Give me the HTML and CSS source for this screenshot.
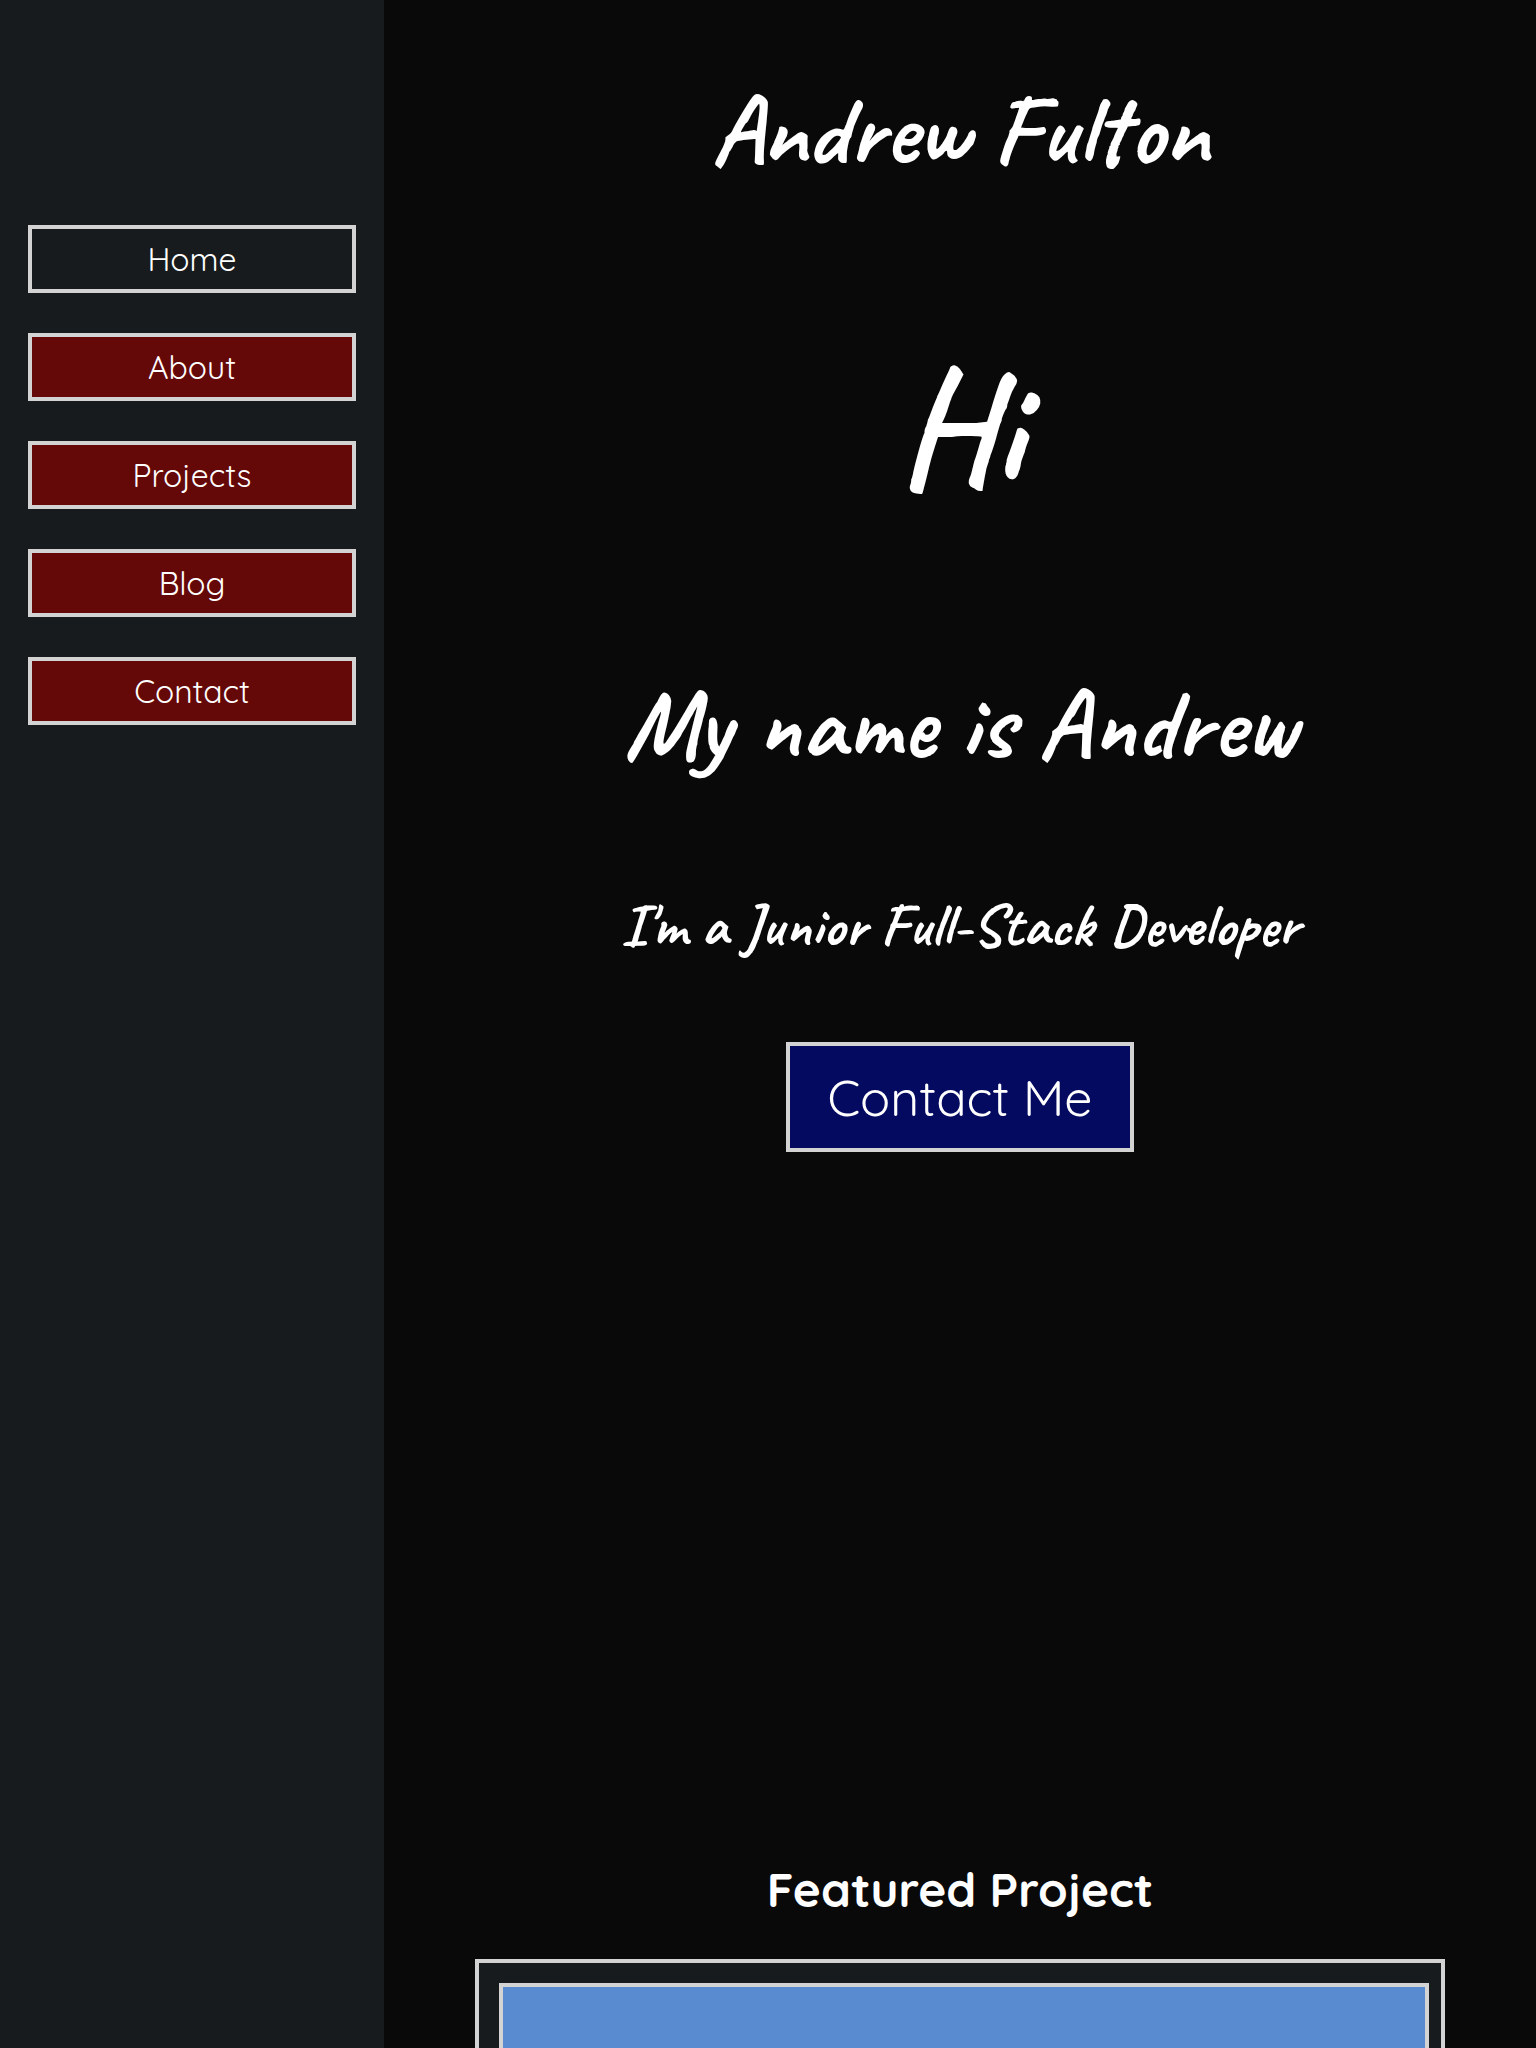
FILE: index.html
```html
<!DOCTYPE html>
<html lang="en">
<head>
<meta charset="utf-8">
<title>Andrew Fulton</title>
<link rel="stylesheet" href="styles.css">
</head>
<body>
<div class="page">
  <nav class="sidebar">
    <a class="nav-link active">Home</a>
    <a class="nav-link">About</a>
    <a class="nav-link">Projects</a>
    <a class="nav-link">Blog</a>
    <a class="nav-link">Contact</a>
  </nav>
  <main class="content">
    <h1 class="script site-name">Andrew Fulton</h1>
    <h2 class="script greeting">Hi</h2>
    <h2 class="script intro">My name is Andrew</h2>
    <h3 class="script role">I'm a Junior Full-Stack Developer</h3>
    <a class="contact-button">Contact Me</a>
    <h2 class="featured-title">Featured Project</h2>
    <section class="card"><div class="card-image"></div></section>
  </main>
</div>
</body>
</html>
```
FILE: styles.css
```css
* { box-sizing: border-box; }
body { margin: 0; background: #0a0909; color: #fff; font-family: Quicksand, Lato, sans-serif; }
.page { display: flex; height: 2048px; overflow: hidden; }
.sidebar { width: 384px; padding: 225px 28px 0; background: #171b1d; display: flex; flex-direction: column; gap: 40px; }
.nav-link { height: 68px; border: 4px solid lightgray; background: #650808; font-size: 31.8px; font-weight: 400; line-height: 60px; text-align: center; }
.nav-link.active { background: #171b1d; }
.content { flex: 1; display: flex; flex-direction: column; align-items: center; }
.content > * { flex: none; }
h1, h2, h3 { margin: 0; white-space: nowrap; }
.script { font-family: Caveat, Lato, cursive; font-weight: 700; }
.site-name { font-size: 100px; height: 270px; line-height: 260px; }
.greeting { font-size: 160px; height: 346px; line-height: 314px; }
.intro { font-size: 100px; height: 226px; line-height: 216px; }
.role { font-size: 60px; height: 166px; line-height: 166px; }
.contact-button { width: 348px; height: 110px; margin-top: 34px; border: 4px solid lightgray; background: #040a60; font-size: 50px; font-weight: 400; line-height: 104px; text-align: center; }
.featured-title { margin-top: 667px; font-size: 47.7px; height: 140px; line-height: 141px; font-weight: 700; }
.card { width: 970px; height: 600px; padding: 20px 12px 20px 20px; border: 4px solid lightgray; background: #171b1d; }
.card-image { height: 100%; border: 4px solid lightgray; background: #588bd0; }
```
